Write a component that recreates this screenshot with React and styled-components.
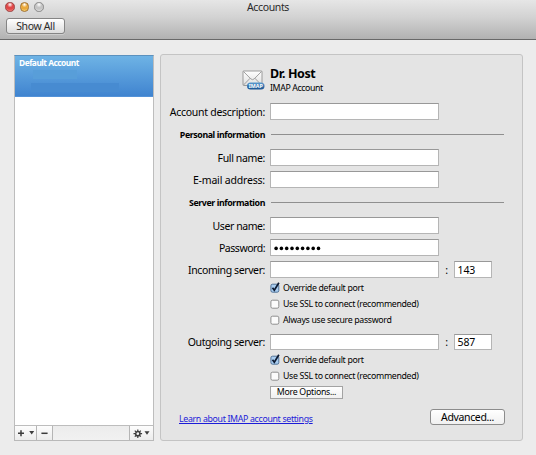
import React from "react";
import styled, { createGlobalStyle } from "styled-components";

const Global = createGlobalStyle`
  * { box-sizing: border-box; }
  body {
    margin: 0;
    background: #ececec;
    font-family: "Noto Sans", "Open Sans", sans-serif;
    color: #000;
  }
`;

const Window = styled.div`
  width: 536px;
  height: 455px;
  overflow: hidden;
  background: #ececec;
`;

const Toolbar = styled.header`
  height: 40px;
  background: linear-gradient(#e6e6e6, #d2d2d2 45%, #b2b2b2);
  border-bottom: 1px solid #696969;
`;

const TitleRow = styled.div`
  display: grid;
  grid-template-columns: 60px 1fr 60px;
  align-items: center;
  height: 14px;
`;

const Lights = styled.div`
  display: flex;
  gap: 5px;
  padding-left: 5px;
`;

const Light = styled.span`
  width: 9.5px;
  height: 9.5px;
  border-radius: 50%;
  border: 1px solid ${(p) => p.$edge};
  background: radial-gradient(circle at 50% 20%, #fff 0, ${(p) => p.$fill} 38%, ${(p) => p.$fill} 60%, ${(p) => p.$glow} 100%);
`;

const Text = styled.span`
  display: block;
  font-size: ${(p) => p.$size || 10.5}px;
  font-weight: ${(p) => p.$weight || 400};
  letter-spacing: ${(p) => p.$track ?? -0.36}px;
  color: ${(p) => p.$color || "#000"};
  line-height: ${(p) => p.$line || 14}px;
  white-space: nowrap;
`;

const Title = styled(Text)`
  text-align: center;
`;

const PushButton = styled.button`
  display: flex;
  align-items: center;
  justify-content: center;
  width: ${(p) => p.$w}px;
  height: ${(p) => p.$h}px;
  padding: 0;
  border: 1px solid ${(p) => p.$edge || "#8c8c8c"};
  border-radius: ${(p) => p.$radius ?? 3}px;
  background: linear-gradient(#fff, ${(p) => p.$low || "#f0f0f0"});
  font-family: inherit;
`;

const ToolbarButton = styled(PushButton)`
  margin: 4px 0 0 6px;
  box-shadow: 0 1px 0 rgba(255, 255, 255, 0.3);
`;

const Main = styled.main`
  display: grid;
  grid-template-columns: 140px 363px;
  column-gap: 6px;
  height: 401px;
  padding: 14px 0 0 14px;
`;

const Sidebar = styled.aside`
  display: flex;
  flex-direction: column;
  height: 387px;
  padding-top: 1px;
`;

const List = styled.div`
  flex: 1;
  background: #fff;
  border: 1px solid #bdbdbd;
  border-top-color: #5b91be;
`;

const SelectedAccount = styled.div`
  height: 41px;
  padding: 0 0 0 4px;
  background: linear-gradient(#6eb3e5, #4084d0);
  border-bottom: 1px solid #5392d8;
`;

const Redacted = styled.span`
  display: block;
  width: ${(p) => p.$w}px;
  height: ${(p) => p.$h}px;
  margin: ${(p) => p.$margin};
  background: ${(p) => p.$color};
`;

const ListFooter = styled.div`
  display: grid;
  grid-template-columns: 22px 16px 1fr 23px;
  height: 15px;
  border: 1px solid #b9b9b9;
  border-top: 0;
  background: linear-gradient(#ececec, #f1f1f1);
`;

const FooterCell = styled.div`
  display: flex;
  align-items: center;
  justify-content: center;
  border-right: ${(p) => (p.$last ? 0 : 1)}px solid #b5b5b5;
  background: ${(p) => (p.$plain ? "none" : "linear-gradient(#fdfdfd, #ececec)")};
`;

const Panel = styled.section`
  height: 387px;
  border: 1px solid #c4c4c4;
  border-radius: 3px;
  background: #e4e4e4;
`;

const AccountHeader = styled.div`
  display: flex;
  height: 45px;
  padding: 14px 0 0 81px;
`;

const AccountNames = styled.div`
  display: flex;
  flex-direction: column;
  margin: -3px 0 0 4px;
`;

const Row = styled.div`
  display: grid;
  grid-template-columns: 104px 169.5px 15px 42px;
  align-items: center;
  height: ${(p) => p.$h}px;
  padding-top: ${(p) => p.$pad || 0}px;
`;

const Label = styled(Text)`
  justify-self: end;
`;

const Field = styled.div`
  display: flex;
  align-items: center;
  height: 16.5px;
  margin-left: ${(p) => (p.$port ? 4 : 5)}px;
  width: ${(p) => (p.$port ? 38 : 168.5)}px;
  padding-left: 3px;
  border: 1px solid #b5b5b5;
  border-top-color: #989898;
  background: #fff;
`;

const Colon = styled(Text)`
  text-align: center;
  padding-left: 9px;
`;

const SectionRow = styled.div`
  display: grid;
  grid-template-columns: 104px 233px;
  column-gap: 5.5px;
  align-items: center;
  height: ${(p) => p.$h}px;
`;

const Rule = styled.span`
  height: 1px;
  background: #8f8f8f;
`;

const CheckRow = styled.div`
  display: flex;
  align-items: center;
  gap: 3px;
  height: 16px;
  padding-left: 109px;
`;

const MoreRow = styled.div`
  display: flex;
  align-items: center;
  height: 16px;
  padding-left: 109px;
`;

const PanelFooter = styled.div`
  display: flex;
  justify-content: space-between;
  align-items: flex-start;
  padding: 9px 17px 0 18px;
`;

const HelpLink = styled.a`
  margin-top: 3px;
  font-size: 8.8px;
  line-height: 14px;
  letter-spacing: -0.33px;
  color: #1c1cd8;
  text-decoration: underline;
  white-space: nowrap;
`;

function MailIcon() {
  return (
    <svg width="24" height="22" viewBox="0 0 24 22">
      <defs>
        <linearGradient id="paper" x1="0" y1="0" x2="0" y2="1">
          <stop offset="0" stopColor="#fff" />
          <stop offset="1" stopColor="#dedede" />
        </linearGradient>
        <linearGradient id="badge" x1="0" y1="0" x2="0" y2="1">
          <stop offset="0" stopColor="#5c9bd0" />
          <stop offset="1" stopColor="#17508f" />
        </linearGradient>
      </defs>
      <rect x="1" y="2" width="19" height="14.5" rx="0.7" fill="url(#paper)" stroke="#929292" strokeWidth="0.9" />
      <path d="M1.5 16 8.2 9.2M19.5 16l-6.7-6.8M1.5 2.5l7.3 7.4q1.7 1.5 3.4 0l7.3-7.4" fill="none" stroke="#969696" strokeWidth="0.9" />
      <rect x="5" y="13.6" width="17.5" height="7" rx="3.5" fill="url(#badge)" />
      <text x="13.7" y="19.2" textAnchor="middle" fontFamily="Noto Sans, sans-serif" fontSize="5.8" fontWeight="700" fill="#fff" textLength="14" lengthAdjust="spacingAndGlyphs">IMAP</text>
    </svg>
  );
}

function CheckBox({ checked }) {
  return (
    <svg width="10" height="12" viewBox="0 0 10 12">
      <rect x="0.9" y="2.2" width="7.9" height="8" rx="1.6" fill={checked ? "#a9cdf0" : "#fbfbfb"} stroke={checked ? "#45688f" : "#858585"} strokeWidth="0.9" />
      {checked && <path d="M2.5 5.8 4.3 8.2 8.9 0.8" fill="none" stroke="#0b1830" strokeWidth="1.7" />}
    </svg>
  );
}

function Plus() {
  return (
    <svg width="18" height="8" viewBox="0 0 18 8">
      <path d="M1 4.2h6M4 1.2v6" stroke="#3c3c3c" strokeWidth="1.5" />
      <path d="M12.2 2h5L14.7 5.4z" fill="#3c3c3c" />
    </svg>
  );
}

function Minus() {
  return (
    <svg width="7" height="8" viewBox="0 0 7 8">
      <path d="M0.4 4.3h6.2" stroke="#3c3c3c" strokeWidth="1.5" />
    </svg>
  );
}

function Gear() {
  return (
    <svg width="17" height="9" viewBox="0 0 17 9">
      <circle cx="4.8" cy="4.7" r="2.1" fill="none" stroke="#3c3c3c" strokeWidth="1.5" />
      <path d="M4.8.4v2M4.8 7v2M.5 4.7h2M7.1 4.7h2M1.8 1.7l1.2 1.2M6.6 6.5l1.2 1.2M7.8 1.7 6.6 2.9M3 6.5 1.8 7.7" stroke="#3c3c3c" strokeWidth="1.2" />
      <path d="M11.5 2.2h5L14 5.7z" fill="#3c3c3c" />
    </svg>
  );
}

function Dots() {
  return (
    <svg width="48" height="6" viewBox="0 0 48 6">
      {Array.from({ length: 9 }, (_, i) => (
        <circle key={i} cx={2.1 + i * 5.3} cy="3.4" r="1.8" fill="#000" />
      ))}
    </svg>
  );
}

function FormRow({ label, h, pad, port, track, children }) {
  return (
    <Row $h={h} $pad={pad}>
      <Label $track={track}>{label}</Label>
      <Field>{children}</Field>
      {port && <Colon>:</Colon>}
      {port && (
        <Field $port>
          <Text $track={-0.1}>{port}</Text>
        </Field>
      )}
    </Row>
  );
}

function Option({ checked, children }) {
  return (
    <CheckRow>
      <CheckBox checked={checked} />
      <Text $size={8.8} $track={-0.33}>{children}</Text>
    </CheckRow>
  );
}

export default function App() {
  return (
    <>
      <Global />
      <Window>
        <Toolbar>
          <TitleRow>
            <Lights>
              <Light $fill="#e04848" $glow="#ff9a90" $edge="#9c3c3c" />
              <Light $fill="#eaa93c" $glow="#ffe68c" $edge="#a07030" />
              <Light $fill="#c4c4c4" $glow="#eee" $edge="#888" />
            </Lights>
            <Title $color="#2a2a2a">Accounts</Title>
          </TitleRow>
          <ToolbarButton $w={59} $h={16} $low="#dcdcdc" $edge="#858585">
            <Text $color="#2a2a2a">Show All</Text>
          </ToolbarButton>
        </Toolbar>
        <Main>
          <Sidebar>
            <List>
              <SelectedAccount>
                <Text $size={8.4} $weight={700} $track={-0.5} $color="#fff">Default Account</Text>
                <Redacted $w={44} $h={9} $margin="0 0 0 14px" $color="#589ed9" />
                <Redacted $w={88} $h={9} $margin="4px 0 0 12px" $color="#478bd1" />
              </SelectedAccount>
            </List>
            <ListFooter>
              <FooterCell><Plus /></FooterCell>
              <FooterCell><Minus /></FooterCell>
              <FooterCell $plain />
              <FooterCell $last><Gear /></FooterCell>
            </ListFooter>
          </Sidebar>
          <Panel>
            <AccountHeader>
              <MailIcon />
              <AccountNames>
                <Text $size={12.5} $weight={700} $track={-0.4} $line={16}>Dr. Host</Text>
                <Text $size={8.8} $track={-0.4} $line={12}>IMAP Account</Text>
              </AccountNames>
            </AccountHeader>
            <FormRow label="Account description:" h={23} track={-0.28} />
            <SectionRow $h={23}>
              <Label $size={8.8} $weight={700} $track={-0.4}>Personal information</Label>
              <Rule />
            </SectionRow>
            <FormRow label="Full name:" h={23} />
            <FormRow label="E-mail address:" h={21} track={-0.18} />
            <SectionRow $h={25}>
              <Label $size={8.8} $weight={700} $track={-0.4}>Server information</Label>
              <Rule />
            </SectionRow>
            <FormRow label="User name:" h={21} track={-0.42} />
            <FormRow label="Password:" h={23} track={-0.48}><Dots /></FormRow>
            <FormRow label="Incoming server:" h={21} port="143" track={-0.4} />
            <Option checked>Override default port</Option>
            <Option>Use SSL to connect (recommended)</Option>
            <Option>Always use secure password</Option>
            <FormRow label="Outgoing server:" h={24} pad={4} port="587" track={-0.38} />
            <Option checked>Override default port</Option>
            <Option>Use SSL to connect (recommended)</Option>
            <MoreRow>
              <PushButton $w={73} $h={13} $radius={0} $edge="#a3a3a3">
                <Text $size={8.8} $track={-0.3} $line={12}>More Options...</Text>
              </PushButton>
            </MoreRow>
            <PanelFooter>
              <HelpLink>Learn about IMAP account settings</HelpLink>
              <PushButton $w={75} $h={16}>
                <Text>Advanced...</Text>
              </PushButton>
            </PanelFooter>
          </Panel>
        </Main>
      </Window>
    </>
  );
}
